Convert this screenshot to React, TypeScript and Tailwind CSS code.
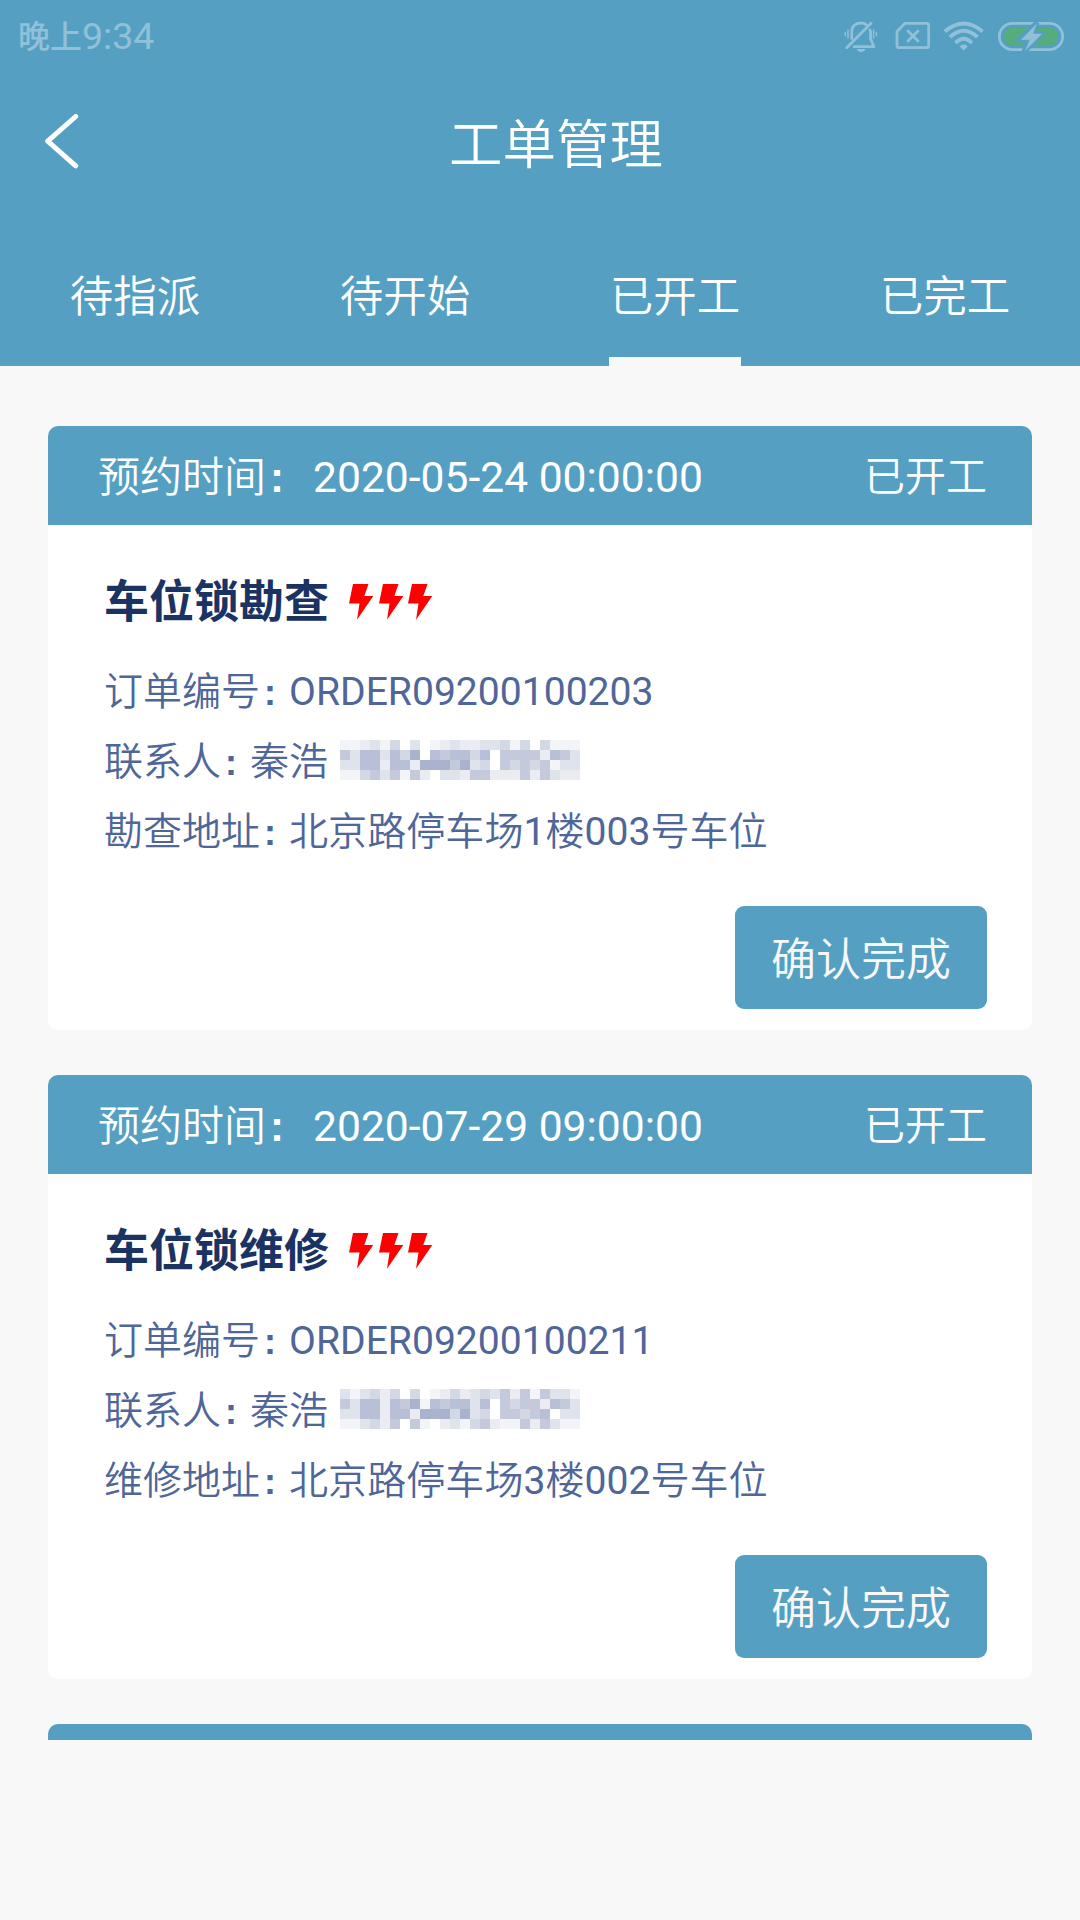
import type { ReactNode } from 'react'
import { clsx } from 'clsx'

interface Order {
  time: string
  title: string
  code: string
  contact: string
  addressLabel: string
  address: string
  mask: string[]
}

const TABS = ['待指派', '待开始', '已开工', '已完工']
const ACTIVE_TAB = '已开工'

// one digit per cell of the masked phone number, 0 is the lightest shade
const MASK_SHADES = ['#ffffff', '#f3f4f8', '#eaecf2', '#dfe3ec', '#d3d8e5', '#c4c9dc', '#b7c0d7', '#a9b3ce']

const ORDERS: Order[] = [
  {
    time: '2020-05-24 00:00:00',
    title: '车位锁勘查',
    code: 'ORDER09200100203',
    contact: '秦浩',
    addressLabel: '勘查地址',
    address: '北京路停车场1楼003号车位',
    mask: ['112314030123223341404111', '536636470656646055552653', '336626627775734054545133', '114535152033255222525322'],
  },
  {
    time: '2020-07-29 09:00:00',
    title: '车位锁维修',
    code: 'ORDER09200100211',
    contact: '秦浩',
    addressLabel: '维修地址',
    address: '北京路停车场3楼002号车位',
    mask: ['313424040124234352515331', '536626571656636054552653', '336626627774734055456033', '113425051023145211525311'],
  },
]

function StatusBar() {
  return (
    <div className="flex h-[74px] items-center justify-between pl-[18px] pr-[14px] text-[#91c1d8]">
      <div className="flex items-center leading-none">
        <span className="text-[32px] font-medium leading-none">晚上</span>
        <span className="text-[37.5px] leading-none">9:34</span>
      </div>
      <svg width="226" height="38" viewBox="0 0 226 38" fill="none" stroke="currentColor" strokeWidth="2.8" strokeLinecap="round" strokeLinejoin="round">
        {/* muted bell */}
        <path d="M6.7 29.700 31 5.300M11.700 20.500V14C11.700 8 15.500 5 21 5c2 0 3.800.6 5.200 1.600M30 12c.5 1 .6 2 .6 3v6l3.400 7.700H14" />
        <path d="M16.700 31h9c-1 2-2.500 3-4.500 3s-3.500-1-4.500-3z" fill="currentColor" stroke="none" />
        <path d="M8 12v8M5.300 14.500v3M33.600 12v8M36.400 14.500v3" strokeWidth="1.500" />
        {/* no sim */}
        <path d="M65 5.300h21.700a2 2 0 0 1 2 2v20.400a2 2 0 0 1-2 2H59a2 2 0 0 1-2-2V13.500zM68 13l10 10M78 13 68 23" />
        {/* wifi */}
        <g strokeWidth="3.800" strokeLinecap="butt">
          <path d="M104.800 13.500Q123.700-2.500 142.600 13.500M110 19.200Q123.700 6.500 137.400 19.200M115.500 25Q123.700 16.500 131.900 25" />
        </g>
        <path d="M123.700 26.500c3 0 4 1.500 3.500 2.500l-3.500 3.500-3.500-3.500c-.5-1 .5-2.500 3.500-2.500z" fill="currentColor" stroke="none" />
        {/* charging battery */}
        <rect x="159.300" y="5.300" width="63.400" height="26.400" rx="13.200" />
        <rect x="163.700" y="9.300" width="54.600" height="18.400" rx="9.200" fill="#56ad7c" stroke="none" />
        <path d="M197 4.500 179 22h9.500L184 34l18-18.500h-9z" fill="#559fc3" stroke="#559fc3" strokeWidth="5" strokeLinejoin="miter" />
        <path d="M197 5.500 181 21.800h8.700L185 33l17-17.300h-9z" fill="currentColor" stroke="none" />
      </svg>
    </div>
  )
}

function Bolt() {
  return (
    <svg width="24.500" height="36" viewBox="0 0 24.500 36" fill="#ff0000">
      <path d="M4 0h15.500l-4.200 12h9L8 35.700l2.500-16.200H0z" />
    </svg>
  )
}

function Mask({ rows }: { rows: string[] }) {
  return (
    <div className="grid grid-cols-[repeat(24,10px)] grid-rows-[repeat(4,10px)]">
      {rows.flatMap((row, y) =>
        row.split('').map((shade, x) => <span key={`${y}-${x}`} style={{ backgroundColor: MASK_SHADES[Number(shade)] }} />)
      )}
    </div>
  )
}

function Field({ label, children }: { label: string; children: ReactNode }) {
  return (
    <p className="whitespace-nowrap">
      <span className="text-[39px] font-[350]">{label}</span>
      <span className="ml-[4px] mr-[13px] font-['Liberation_Sans'] text-[36px] font-bold leading-none">:</span>
      {children}
    </p>
  )
}

function OrderCard({ order }: { order: Order }) {
  return (
    <section className="h-[604px] shrink-0 overflow-hidden rounded-[10px] bg-white">
      <header className="flex h-[99px] items-center justify-between bg-[#559fc3] pl-[50px] pr-[45px] pt-[5px] text-[42px] text-white">
        <p className="whitespace-nowrap">
          <span className="font-[350]">预约时间</span>
          <span className="ml-1 mr-[29px] font-['Liberation_Sans'] font-bold leading-none">:</span>
          <span className="text-[42.6px]">{order.time}</span>
        </p>
        <span className="text-[41px] font-[350]">已开工</span>
      </header>
      <div className="flex flex-col pl-[56px] pr-[45px] pt-[47px]">
        <div className="flex h-[60px] items-center gap-5">
          <h2 className="text-[45px] font-bold leading-none text-[#1a3362]">{order.title}</h2>
          <div className="flex gap-[5px]">
            <Bolt />
            <Bolt />
            <Bolt />
          </div>
        </div>
        <div className="mt-[25px] text-[39.1px] leading-[70px] text-[#4f6699]">
          <Field label="订单编号">{order.code}</Field>
          <div className="flex items-center gap-3">
            <Field label="联系人">
              <span className="font-[350]">{order.contact}</span>
            </Field>
            <div className="-mt-1">
              <Mask rows={order.mask} />
            </div>
          </div>
          <Field label={order.addressLabel}>
            {order.address.split(/(\d+)/).map((part, i) => (
              <span key={i} className={clsx(i % 2 === 0 && 'font-[350]')}>
                {part}
              </span>
            ))}
          </Field>
        </div>
        <button type="button" className="mt-[39px] h-[103px] w-[252px] self-end rounded-[9px] bg-[#559fc3] pt-[6px] text-[45px] font-[350] text-[#f8f8f8]">
          确认完成
        </button>
      </div>
    </section>
  )
}

export default function App() {
  return (
    <div className="flex h-[1920px] w-[1080px] flex-col overflow-hidden bg-[#f8f8f8] font-[Roboto,'Noto_Sans_CJK_SC',sans-serif]">
      <div className="h-[366px] bg-[#559fc3] text-white">
        <StatusBar />
        <div className="flex h-[136px] items-center pl-11 pr-12">
          <svg width="36" height="56" viewBox="0 0 36 56" fill="none" stroke="currentColor" strokeWidth="5" strokeLinecap="round" strokeLinejoin="round">
            <path d="M31.700 2.500 3.700 27.200l28 24.600" />
          </svg>
          <h1 className="flex-1 pt-[7px] text-center text-[53.5px] font-[350] leading-none">工单管理</h1>
        </div>
        <nav className="grid h-[156px] grid-cols-4">
          {TABS.map((tab) => (
            <div key={tab} className="flex flex-col items-center justify-between pt-[52px]">
              <span className="text-[43.5px] font-[350] leading-[72px]">{tab}</span>
              <span className={clsx('h-[9px] w-[132px]', tab === ACTIVE_TAB && 'bg-[#f8f8f8]')} />
            </div>
          ))}
        </nav>
      </div>
      <main className="flex h-[1374px] flex-col gap-[45px] overflow-hidden px-12 pt-[60px]">
        {ORDERS.map((order) => (
          <OrderCard key={order.code} order={order} />
        ))}
        {/* top edge of the next card in the scroll area */}
        <div className="h-[99px] shrink-0 rounded-t-[10px] bg-[#559fc3]" />
      </main>
    </div>
  )
}
